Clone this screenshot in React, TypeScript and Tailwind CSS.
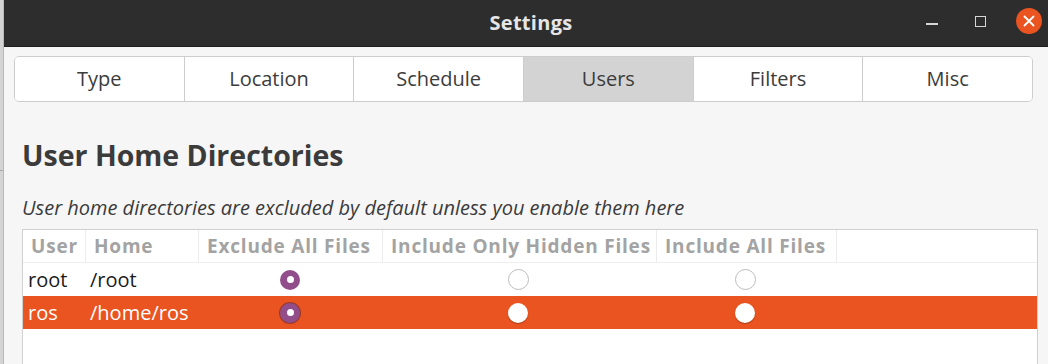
import React from "react";

const tabs = ["Type", "Location", "Schedule", "Users", "Filters", "Misc"];

function Radio({ checked, selected }: { checked: boolean; selected: boolean }) {
  if (checked) {
    return (
      <div
        className={`w-[20px] h-[20px] rounded-full bg-[#924d8b] flex items-center justify-center ${
          selected ? "shadow-[0_0_0_1px_#9a3a2a]" : ""
        }`}
      >
        <div className="w-[7px] h-[7px] rounded-full bg-white" />
      </div>
    );
  }
  if (selected) {
    return <div className="w-[20px] h-[20px] rounded-full bg-white shadow-[0_1px_1px_#a83c16]" />;
  }
  return <div className="w-[21px] h-[21px] rounded-full bg-white border-[1.5px] border-[#bdbdbd]" />;
}

const rows = [
  { user: "root", home: "/root", sel: 0, selected: false },
  { user: "ros", home: "/home/ros", sel: 0, selected: true },
];

const cols = [
  { label: "User", w: "w-[63px]" },
  { label: "Home", w: "w-[113px]" },
  { label: "Exclude All Files", w: "w-[184px]" },
  { label: "Include Only Hidden Files", w: "w-[274px]" },
  { label: "Include All Files", w: "w-[180px]" },
];

export default function App() {
  return (
    <div
      className="w-[1048px] h-[364px] flex overflow-hidden"
      style={{ fontFamily: '"Open Sans", "Noto Sans", sans-serif' }}
    >
      <div className="w-[4px] bg-[#d4d4d4] border-r border-[#b8b8b8] flex flex-col">
        <div className="h-[170px]" />
        <div className="h-px bg-[#a8a8a8]" />
      </div>
      <div className="flex-1 flex flex-col bg-[#f6f6f6]">
        {/* Title bar */}
        <div className="h-[47px] bg-[#2e2d2d] border-b border-[#1e1e1e] flex items-center relative shrink-0">
          <div className="flex-1 text-center text-[20px] font-bold text-[#e6e6e6] pl-[10px] tracking-[0.3px]">Settings</div>
          <div className="absolute right-[6px] top-[8px] flex items-center">
            <div className="w-[12px] h-[2px] bg-[#d6d6d6] mt-[6px] mr-[37px]" />
            <div className="w-[11px] h-[11px] border-[1.5px] border-[#d6d6d6] mr-[30px]" />
            <div className="w-[26px] h-[26px] rounded-full bg-[#e95420] flex items-center justify-center">
              <svg width="12" height="12" viewBox="0 0 12 12">
                <path d="M1.5 1.5 L10.5 10.5 M10.5 1.5 L1.5 10.5" stroke="#ffffff" strokeWidth="1.8" strokeLinecap="round" />
              </svg>
            </div>
          </div>
        </div>

        {/* Content */}
        <div className="flex flex-col pl-[10px] pr-[15px] pt-[9px]">
          <div className="flex h-[46px] border border-[#cdcdcd] rounded-[5px] bg-white overflow-hidden">
            {tabs.map((t, i) => (
              <div
                key={t}
                className={`flex-1 flex items-center justify-center text-[20px] text-[#3c3c3c] ${
                  i > 0 ? "border-l border-[#cdcdcd]" : ""
                } ${t === "Users" ? "bg-[#d3d3d3]" : "bg-white"}`}
              >
                {t}
              </div>
            ))}
          </div>
        </div>

        <div className="flex flex-col pl-[18px] pr-[10px]">
          <div className="mt-[37px] text-[28.5px] font-bold text-[#3b3b3b] leading-[32px]">User Home Directories</div>
          <div className="mt-[25px] text-[20px] italic text-[#3b3b3b] leading-[24px]">
            User home directories are excluded by default unless you enable them here
          </div>
          <div className="mt-[9px] border-[1.5px] border-[#d0d0d0] bg-white h-[200px] flex flex-col">
            <div className="flex h-[33px] border-b border-[#eeeeee]">
              {cols.map((c) => (
                <div
                  key={c.label}
                  className={`${c.w} border-r border-[#ececec] flex items-center pl-[8px] text-[19px] tracking-[0.8px] font-bold text-[#a3a3a3] whitespace-nowrap`}
                >
                  {c.label}
                </div>
              ))}
            </div>
            {rows.map((r) => (
              <div
                key={r.user}
                className={`flex h-[33px] items-center ${r.selected ? "bg-[#e95420] text-white" : "text-[#1b1b1b]"}`}
              >
                <div className="w-[63px] pl-[5px] text-[20px]">{r.user}</div>
                <div className="w-[113px] pl-[4px] text-[20px]">{r.home}</div>
                {[0, 1, 2].map((k) => (
                  <div
                    key={k}
                    className={`${k === 0 ? "w-[182px]" : k === 1 ? "w-[274px]" : "w-[180px]"} flex justify-center`}
                  >
                    <Radio checked={r.sel === k} selected={r.selected} />
                  </div>
                ))}
              </div>
            ))}
          </div>
        </div>
      </div>
    </div>
  );
}
